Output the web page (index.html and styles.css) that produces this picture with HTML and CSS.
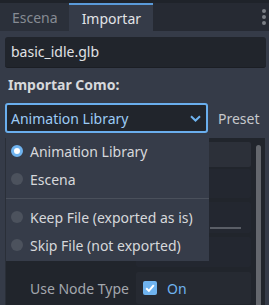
FILE: index.html
```html
<!DOCTYPE html>
<html lang="es">
<head>
    <meta charset="UTF-8">
    <title>Importar</title>
    <link rel="stylesheet" href="styles.css">
</head>
<body>
    <div class="dock">
        <div class="tabs">
            <div class="tab">Escena</div>
            <div class="tab active">Importar</div>
            <div class="tab-fill">
                <div class="menu-dots"><span></span><span></span><span></span></div>
            </div>
        </div>

        <div class="content">
            <div class="file-field">basic_idle.glb</div>
            <div class="section-label">Importar Como:</div>

            <div class="import-row">
                <div class="select-wrap">
                    <div class="select">
                        <span>Animation Library</span>
                        <svg class="chevron" width="11" height="7" viewBox="0 0 11 7">
                            <path d="M1 1.2 L5.5 5.5 L10 1.2" fill="none" stroke="#6fb3ef" stroke-width="2"/>
                        </svg>
                    </div>

                    <div class="popup">
                        <div class="option"><span class="radio checked"></span>Animation Library</div>
                        <div class="option"><span class="radio"></span>Escena</div>
                        <div class="separator"></div>
                        <div class="option"><span class="radio"></span>Keep File (exported as is)</div>
                        <div class="option"><span class="radio"></span>Skip File (not exported)</div>
                    </div>
                </div>
                <div class="preset">Preset</div>
            </div>

            <div class="inspector">
                <div class="rows">
                    <div class="row r1"><div class="key"></div><div class="val"></div></div>
                    <div class="row r2"><div class="key"></div><div class="val"></div></div>
                    <div class="row r3"><div class="key"></div><div class="val"><div class="slider"></div></div></div>
                    <div class="row r4"><div class="key"></div><div class="val"></div></div>
                    <div class="row r5">
                        <div class="key">Use Node Type</div>
                        <div class="val">
                            <span class="check">
                                <svg width="14" height="14" viewBox="0 0 14 14">
                                    <rect width="14" height="14" rx="2" fill="#6fb3ef"/>
                                    <path d="M3.2 7.2 L5.9 9.9 L10.8 4.2" fill="none" stroke="#fff" stroke-width="2"/>
                                </svg>
                            </span>
                            <span class="on">On</span>
                        </div>
                    </div>
                </div>
                <div class="scrollbar"><div class="thumb"></div></div>
            </div>
        </div>
    </div>
</body>
</html>
```

FILE: styles.css
```css
body {
    margin: 0;
    background-color: #353b48;
    font-family: 'Noto Sans', sans-serif;
    font-size: 14px;
    color: #dcdee1;
    overflow: hidden;
}

.dock {
    width: 269px;
    height: 305px;
    display: flex;
    flex-direction: column;
}

.tabs {
    display: flex;
    height: 31px;
    padding-top: 3px;
    box-sizing: border-box;
    background-color: #1f232a;
}

.tab {
    display: flex;
    align-items: center;
    padding: 0 11px 0 12px;
    height: 28px;
    background-color: #2b303a;
    color: #868b93;
    box-sizing: border-box;
}

.tab.active {
    background-color: #353b48;
    color: #e2e4e7;
    border-top: 2px solid #5a9ad9;
    padding: 0 12px 0 13px;
}

.tab-fill {
    flex: 1;
    background-color: #262a33;
    display: flex;
    justify-content: flex-end;
    align-items: center;
    padding-right: 3px;
}

.menu-dots {
    display: flex;
    flex-direction: column;
    gap: 2px;
}

.menu-dots span {
    width: 4px;
    height: 4px;
    border-radius: 50%;
    background-color: #7b7f86;
}

.content {
    flex: 1;
    padding: 6px 3px 0 5px;
    display: flex;
    flex-direction: column;
}

.file-field {
    height: 30px;
    line-height: 30px;
    padding-left: 6px;
    background-color: #21252c;
    border-radius: 3px;
    border-bottom: 1px solid #1b1e24;
    color: #e0e2e5;
}

.section-label {
    margin-top: 7px;
    padding-left: 3px;
    font-weight: bold;
    color: #d7d9dc;
    line-height: 20px;
}

.import-row {
    display: flex;
    align-items: center;
    margin-top: 8px;
}

.select-wrap {
    position: relative;
}

.select {
    width: 203px;
    height: 30px;
    box-sizing: border-box;
    border: 2px solid #6aaeed;
    border-radius: 3px;
    background-color: #21252c;
    color: #9ccbf5;
    display: flex;
    align-items: center;
    justify-content: space-between;
    padding: 0 5px 0 4px;
}

.preset {
    margin-left: 10px;
    color: #c6c8cc;
}

.popup {
    position: absolute;
    top: 32px;
    left: 1px;
    width: 203px;
    background-color: #363c49;
    z-index: 2;
    padding-top: 2px;
    padding-bottom: 2px;
}

.option {
    display: flex;
    align-items: center;
    height: 28px;
    padding-left: 5px;
    color: #d6d8db;
}

.radio {
    width: 12px;
    height: 12px;
    border-radius: 50%;
    background-color: #4c525d;
    margin-right: 7px;
    box-sizing: border-box;
}

.radio.checked {
    background-color: #ffffff;
    border: 3px solid #6fb3ef;
}

.separator {
    height: 1px;
    background-color: #4a505b;
    margin: 5px 0 4px;
}

.inspector {
    margin-top: 5px;
    margin-right: 1px;
    flex: 1;
    display: flex;
    background-color: #21252c;
    border-left: 1px solid #2a2f38;
    padding-top: 4px;
}

.rows {
    flex: 1;
    display: flex;
    flex-direction: column;
}

.row {
    display: flex;
    flex-shrink: 0;
}

.r1 {
    height: 25px;
}

.r1 .val {
    background-color: #2c3039;
}

.r2 {
    height: 29px;
    margin-top: 2px;
}

.r3 {
    height: 31px;
    margin-top: 4px;
}

.r4 {
    height: 30px;
    margin-top: 4px;
}

.r5 {
    height: 32px;
    margin-top: 5px;
}

.r5 .val {
    background-color: #262a32;
}

.key {
    width: 130px;
    display: flex;
    align-items: center;
    padding-left: 24px;
    box-sizing: border-box;
    color: #a3a7ad;
}

.val {
    flex: 1;
    background-color: #232730;
    border-radius: 2px;
    display: flex;
    align-items: center;
    padding-left: 7px;
    position: relative;
}

.slider {
    position: absolute;
    left: 74px;
    right: 10px;
    bottom: 4px;
    height: 2px;
    background-color: #5a5e66;
}

.check {
    display: flex;
    margin-right: 10px;
}

.on {
    color: #6fb3ef;
}

.scrollbar {
    width: 14px;
    display: flex;
    justify-content: center;
    padding-top: 3px;
}

.thumb {
    width: 5px;
    height: 100%;
    border-radius: 3px 3px 0 0;
    background-color: #64676d;
}
```
